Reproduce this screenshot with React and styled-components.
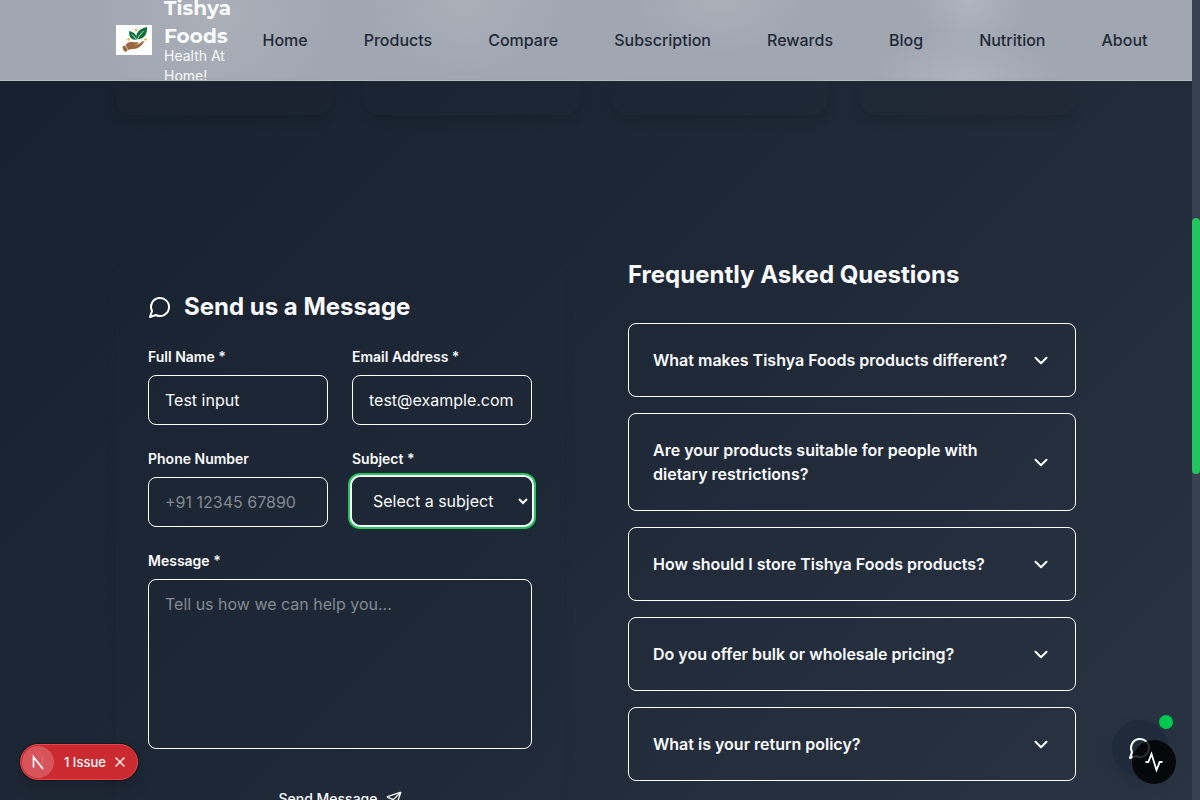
import React from "react";
import styled, { createGlobalStyle } from "styled-components";
import { Send, X } from "lucide-react";

const GlobalStyle = createGlobalStyle`
  *, *::before, *::after { box-sizing: border-box; }
  body { margin: 0; overflow: hidden; font-family: Inter, "Liberation Sans", sans-serif; }
  button, input, textarea, select { font: inherit; color: inherit; margin: 0; }
`;

const Screen = styled.div`
  position: relative;
  display: flex;
  width: 1200px;
  height: 800px;
  overflow: hidden;
  color: #fafbfc;
  font-size: 16px;
  line-height: 24px;
`;

const Page = styled.div`
  flex: 1;
  display: flex;
  flex-direction: column;
  height: 800px;
  overflow: hidden;
  background: linear-gradient(135deg, #17202e 0%, #1f2836 50%, #2a3342 100%);
`;

const ScrollTrack = styled.div`
  width: 8px;
  padding-top: 218px;
  background: #374151;
`;

const ScrollThumb = styled.div`
  height: 256px;
  border-radius: 4px;
  background: #22c55e;
`;

const Header = styled.header`
  flex: none;
  display: flex;
  align-items: center;
  height: 81px;
  padding-left: 116px;
  overflow: hidden;
  border-bottom: 1px solid #b5bbc3;
  background:
    radial-gradient(ellipse 100px 75px at 465px 0, #aaafb8 0%, rgba(170, 175, 184, 0) 100%),
    radial-gradient(ellipse 120px 110px at 215px 15px, #aaafb8 0%, rgba(170, 175, 184, 0) 100%),
    radial-gradient(ellipse 85px 55px at 720px 0, #aaafb8 0%, rgba(170, 175, 184, 0) 100%),
    radial-gradient(ellipse 55px 55px at 970px 0, #afb5be 0%, rgba(175, 181, 190, 0) 100%),
    radial-gradient(ellipse 90px 50px at 965px 80px, #aeb4bd 0%, rgba(174, 180, 189, 0) 100%),
    #a1a7b1;
`;

const Brand = styled.div`
  flex: none;
  display: flex;
  align-items: center;
  gap: 12px;
  width: 146.5px;
`;

const BrandText = styled.div`
  width: 70px;
`;

const BrandName = styled.div`
  font-family: Montserrat, Inter, sans-serif;
  font-size: 20px;
  line-height: 28px;
  font-weight: 700;
  letter-spacing: 0.1px;
`;

const Tagline = styled.div`
  margin-top: -4px;
  font-size: 14px;
  line-height: 20px;
`;

const Nav = styled.nav`
  display: flex;
  gap: 56px;
`;

const NavLink = styled.a`
  color: #1f2937;
  font-weight: 500;
  white-space: nowrap;
`;

const CardRow = styled.div`
  flex: none;
  display: grid;
  grid-template-columns: repeat(4, 216px);
  gap: 32px;
  height: 178px;
  padding: 0 116px;
`;

const InfoCard = styled.div`
  height: 34px;
  border-radius: 0 0 16px 16px;
  background: rgba(31, 41, 55, 0.15);
  box-shadow: 0 6px 12px -3px rgba(10, 18, 26, 0.25);
`;

const Columns = styled.main`
  flex: none;
  display: grid;
  grid-template-columns: 448px 448px;
  gap: 64px;
  padding: 0 116px;
`;

const FormCard = styled.form`
  height: 620px;
  padding: 32px;
  border-radius: 16px;
  background: rgba(31, 41, 55, 0.1);
  box-shadow: 0 10px 15px -3px rgba(10, 18, 26, 0.12);
`;

const Title = styled.h2`
  display: flex;
  align-items: center;
  gap: 12px;
  margin: 0 0 ${(p) => p.$gap}px;
  font-size: 24px;
  line-height: 32px;
  font-weight: 700;
`;

const FieldGrid = styled.div`
  display: grid;
  grid-template-columns: 180px 180px;
  gap: 24px;
  margin-bottom: 24px;
`;

const Field = styled.label`
  display: flex;
  flex-direction: column;
  gap: 8px;
`;

const FieldLabel = styled.span`
  font-size: 14px;
  line-height: 20px;
  font-weight: 600;
`;

const Input = styled.input`
  width: 100%;
  height: 50px;
  padding: 12px 16px;
  border: 1px solid #fff;
  border-radius: 8px;
  outline: none;
  background: transparent;
  &::placeholder { color: #848a92; }
`;

const TextArea = styled.textarea`
  height: 170px;
  padding: 12px 16px;
  border: 1px solid #fff;
  border-radius: 8px;
  outline: none;
  resize: none;
  background: transparent;
  &::placeholder { color: #848a92; }
`;

const Select = styled.select`
  width: 100%;
  height: 48px;
  padding: 11px 16px;
  border: 1px solid #1e2735;
  border-radius: 8px;
  outline: none;
  background: #1e2735;
  box-shadow: 0 0 0 2px #fff, 0 0 0 4px #22c55e;
`;

const SubmitButton = styled.button`
  display: flex;
  align-items: center;
  justify-content: center;
  gap: 8px;
  width: 100%;
  height: 52px;
  margin-top: 24px;
  border: 0;
  background: transparent;
  font-size: 14px;
  font-weight: 500;
`;

const FaqList = styled.div`
  display: flex;
  flex-direction: column;
  gap: 16px;
`;

const FaqItem = styled.button`
  display: flex;
  align-items: center;
  justify-content: space-between;
  padding: 24px;
  border: 1px solid #fff;
  border-radius: 8px;
  background: transparent;
  font-weight: 600;
  text-align: left;
  svg { flex: none; }
`;

const Question = styled.span`
  max-width: 362px;
`;

const IssueBadge = styled.div`
  position: absolute;
  left: 20px;
  top: 744px;
  display: flex;
  align-items: center;
  width: 118px;
  height: 36px;
  padding-left: 1px;
  border: 1px solid #e5484d;
  border-radius: 18px;
  background: #ca2a30;
  box-shadow: 0 0 0 1px rgba(0, 0, 0, 0.35), 0 8px 16px rgba(0, 0, 0, 0.15);
  font-size: 13px;
  font-weight: 500;
  > svg { flex: none; margin-left: 6px; }
`;

const IssueLogo = styled.div`
  display: flex;
  align-items: center;
  justify-content: center;
  width: 32px;
  height: 32px;
  margin-right: 10px;
  border-radius: 50%;
  background: #d6545a;
`;

const Bubble = styled.div`
  position: absolute;
  left: ${(p) => p.$x}px;
  top: ${(p) => p.$y}px;
  display: flex;
  align-items: center;
  justify-content: center;
  width: ${(p) => p.$size}px;
  height: ${(p) => p.$size}px;
  border-radius: 50%;
  background: ${(p) => p.$bg};
  box-shadow: ${(p) => p.$shadow || "none"};
`;

const LogoMark = () => (
  <svg width="36" height="30" viewBox="0 0 36 30">
    <rect width="36" height="30" fill="#fff" />
    <path d="M20.5 14.5C19 8.500 23 3.500 31 2C31.500 9.500 28 14.500 20.500 14.500Z" fill="#14713e" />
    <path d="M20.500 15C14.500 15 12.500 11 13.200 6C18 7.500 21.500 9.500 20.500 15Z" fill="#14713e" />
    <path d="M20.500 16.500Q22 11 27.500 6M20.300 15Q18.500 11.500 16 9.500" fill="none" stroke="#fff" strokeWidth="0.7" />
    <path d="M9.500 20C12.500 16.500 15.500 16.300 18 17.300H22C23.200 18.300 22 19.500 18 19.800C22 20.300 24.500 17.500 27 16C29 15.800 27.200 19.500 23.500 22C19.500 25 15.500 23.200 12.500 25Z" fill="#99683c" />
    <path d="M6.500 21.500L9 20.500L12 25L9.500 27Q6.500 25.500 6.500 21.500Z" fill="#99683c" />
    <path d="M20 3L20.700 4.300L22 5L20.700 5.700L20 7L19.300 5.700L18 5L19.300 4.300ZM12.500 12.500L13.200 13.800L14.500 14.500L13.200 15.200L12.500 16.500L11.800 15.200L10.500 14.500L11.800 13.800ZM29.500 12.500L30.200 13.800L31.500 14.500L30.200 15.200L29.500 16.500L28.800 15.200L27.500 14.500L28.800 13.800Z" fill="#efb354" />
  </svg>
);

const ChatIcon = () => (
  <svg width="24" height="24" viewBox="0 0 24 24" fill="none" stroke="#fff" strokeWidth="2" strokeLinecap="round" strokeLinejoin="round">
    <path d="M7.9 20A9 9 0 1 0 4 16.100L2 22Z" />
  </svg>
);

const Chevron = () => (
  <svg width="20" height="20" viewBox="0 0 20 20" fill="none" stroke="#fff" strokeWidth="2" strokeLinecap="round" strokeLinejoin="round">
    <path d="M4.500 7.800L10 13.200L15.500 7.800" />
  </svg>
);

const NextMark = () => (
  <svg width="14" height="16" viewBox="0 0 14 16" fill="none">
    <path d="M2.500 13.500V3L12 15" stroke="#fff" strokeWidth="1.700" />
    <path d="M11.300 2.500V10.500" stroke="#fff" strokeWidth="1.400" opacity="0.150" />
  </svg>
);

const Pulse = () => (
  <svg width="22" height="22" viewBox="0 0 22 22" fill="none" stroke="#fff" strokeWidth="1.800">
    <path d="M2.500 11H5.300L8.500 3L13.500 19L16.700 11H19.500" />
  </svg>
);

const links = ["Home", "Products", "Compare", "Subscription", "Rewards", "Blog", "Nutrition", "About"];
const questions = [
  "What makes Tishya Foods products different?",
  "Are your products suitable for people with dietary restrictions?",
  "How should I store Tishya Foods products?",
  "Do you offer bulk or wholesale pricing?",
  "What is your return policy?",
];

export default function App() {
  return (
    <Screen>
      <GlobalStyle />
      <Page>
        <Header>
          <Brand>
            <LogoMark />
            <BrandText>
              <BrandName>Tishya Foods</BrandName>
              <Tagline>Health At Home!</Tagline>
            </BrandText>
          </Brand>
          <Nav>
            {links.map((l) => <NavLink key={l}>{l}</NavLink>)}
          </Nav>
        </Header>
        <CardRow>
          {[0, 1, 2, 3].map((i) => <InfoCard key={i} />)}
        </CardRow>
        <Columns>
          <FormCard>
            <Title $gap={24}><ChatIcon />Send us a Message</Title>
            <FieldGrid>
              <Field><FieldLabel>Full Name *</FieldLabel><Input defaultValue="Test input" /></Field>
              <Field><FieldLabel>Email Address *</FieldLabel><Input defaultValue="test@example.com" /></Field>
              <Field><FieldLabel>Phone Number</FieldLabel><Input placeholder="+91 12345 67890" /></Field>
              <Field>
                <FieldLabel>Subject *</FieldLabel>
                <Select><option>Select a subject</option></Select>
              </Field>
            </FieldGrid>
            <Field><FieldLabel>Message *</FieldLabel><TextArea placeholder="Tell us how we can help you..." /></Field>
            <SubmitButton type="button">Send Message<Send size={16} /></SubmitButton>
          </FormCard>
          <section>
            <Title $gap={32}>Frequently Asked Questions</Title>
            <FaqList>
              {questions.map((q) => (
                <FaqItem key={q}><Question>{q}</Question><Chevron /></FaqItem>
              ))}
            </FaqList>
          </section>
        </Columns>
      </Page>
      <ScrollTrack><ScrollThumb /></ScrollTrack>
      <IssueBadge>
        <IssueLogo><NextMark /></IssueLogo>
        1 Issue
        <X size={16} />
      </IssueBadge>
      <Bubble $x={1112} $y={720} $size={56} $bg="#1f2b3b" $shadow="0 8px 14px rgba(20,30,40,.25)"><ChatIcon /></Bubble>
      <Bubble $x={1132} $y={740} $size={44} $bg="rgba(0,0,0,.82)"><Pulse /></Bubble>
      <Bubble $x={1159} $y={715} $size={14} $bg="#00c951" />
    </Screen>
  );
}
